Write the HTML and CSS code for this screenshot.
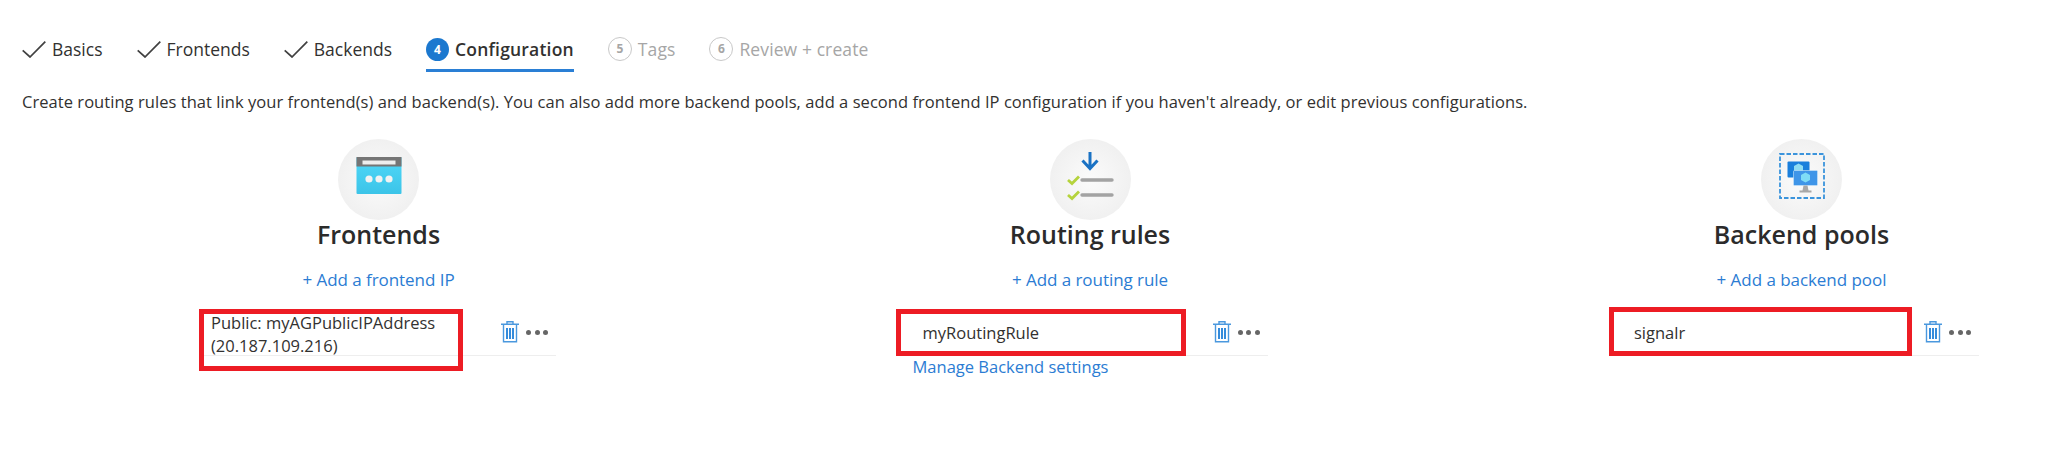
FILE: index.html
```html
<!DOCTYPE html>
<html lang="en">
<head>
  <meta charset="UTF-8" />
  <title>Create application gateway</title>
  <link rel="stylesheet" href="styles.css">
</head>
<body>

  <div class="tabs">
    <div class="tab">
      <svg class="check" viewBox="0 0 24 17"><path d="M0.7 9.3 L8 16 L23.3 0.7"/></svg>
      <span>Basics</span>
    </div>
    <div class="tab">
      <svg class="check" viewBox="0 0 24 17"><path d="M0.7 9.3 L8 16 L23.3 0.7"/></svg>
      <span>Frontends</span>
    </div>
    <div class="tab">
      <svg class="check" viewBox="0 0 24 17"><path d="M0.7 9.3 L8 16 L23.3 0.7"/></svg>
      <span>Backends</span>
    </div>
    <div class="tab active">
      <span class="step">4</span>
      <span>Configuration</span>
    </div>
    <div class="tab disabled">
      <span class="step">5</span>
      <span>Tags</span>
    </div>
    <div class="tab disabled">
      <span class="step">6</span>
      <span>Review + create</span>
    </div>
  </div>

  <p class="intro">Create routing rules that link your frontend(s) and backend(s). You can also add more backend pools, add a second frontend IP configuration if you haven't already, or edit previous configurations.</p>

  <div class="columns">

    <div class="column">
      <div class="icon-circle">
        <svg viewBox="0 0 46 45" width="46" height="45">
          <defs>
            <linearGradient id="sky" x1="0" y1="0" x2="0" y2="1">
              <stop offset="0" stop-color="#50d8f8"/>
              <stop offset="1" stop-color="#3cc4e8"/>
            </linearGradient>
          </defs>
          <rect x="0.5" y="0" width="45" height="37" rx="1" fill="url(#sky)"/>
          <rect x="0.5" y="0" width="45" height="9.5" fill="#757575"/>
          <rect x="6.5" y="3.5" width="33" height="4" fill="#eeeeee"/>
          <circle cx="13" cy="22" r="3.6" fill="#f2f2f2"/>
          <circle cx="23" cy="22" r="3.6" fill="#f2f2f2"/>
          <circle cx="33" cy="22" r="3.6" fill="#f2f2f2"/>
        </svg>
      </div>
      <h2>Frontends</h2>
      <a class="add-link" href="#">+ Add a frontend IP</a>
      <div class="item-row">
        <div class="item-name two-line">Public: myAGPublicIPAddress<br>(20.187.109.216)</div>
        <svg class="trash" viewBox="0 0 18 22"><path class="trash-line" d="M0 3.3 H18 M6 3 V0.7 H12 V3 M2.5 3.5 V20.7 H15.5 V3.5"/><path class="trash-bars" d="M6 7 V18 M9 7 V18 M12 7 V18"/></svg>
        <div class="dots"><i></i><i></i><i></i></div>
        <div class="callout callout-frontend"></div>
      </div>
    </div>

    <div class="column">
      <div class="icon-circle">
        <svg viewBox="0 0 50 59" width="50" height="59">
          <path d="M25 2 V19 M17.5 10.5 L25 18.5 L32.5 10.5" fill="none" stroke="#1a72c4" stroke-width="3"/>
          <path d="M3 30 L7 33.5 L14 26.5 M3 45 L7 48.5 L14 41.5" fill="none" stroke="#b5d33d" stroke-width="2.8"/>
          <path d="M17 30 H47 M17 45 H47" fill="none" stroke="#a3a3a3" stroke-width="3.4" stroke-linecap="round"/>
        </svg>
      </div>
      <h2>Routing rules</h2>
      <a class="add-link" href="#">+ Add a routing rule</a>
      <div class="item-row">
        <div class="item-name">myRoutingRule</div>
        <svg class="trash" viewBox="0 0 18 22"><path class="trash-line" d="M0 3.3 H18 M6 3 V0.7 H12 V3 M2.5 3.5 V20.7 H15.5 V3.5"/><path class="trash-bars" d="M6 7 V18 M9 7 V18 M12 7 V18"/></svg>
        <div class="dots"><i></i><i></i><i></i></div>
        <div class="callout callout-rule"></div>
      </div>
      <a class="manage-link" href="#">Manage Backend settings</a>
    </div>

    <div class="column">
      <div class="icon-circle">
        <svg viewBox="0 0 46 54" width="46" height="54">
          <rect x="1" y="1" width="44" height="44" fill="none" stroke="#3b94dc" stroke-width="1.8" stroke-dasharray="4.5 2"/>
          <rect x="8.5" y="8.5" width="22" height="16" rx="1" fill="#1a7fdc"/>
          <path d="M19.5 10.5 L24 13 V18 L19.5 20.5 L15 18 V13 Z" fill="#8fdcf2"/>
          <rect x="14.5" y="17.5" width="24" height="15" rx="1" fill="#3f95e8" stroke="#cfe5f8" stroke-width="0.6"/>
          <path d="M26.5 19.5 L31 22 V27 L26.5 29.5 L22 27 V22 Z" fill="#7fdcf6"/>
          <path d="M24.5 32.5 H28.5 L29.5 37.5 H32.5 V39.5 H20.5 V37.5 H23.5 Z" fill="#a8a8a8"/>
        </svg>
      </div>
      <h2>Backend pools</h2>
      <a class="add-link" href="#">+ Add a backend pool</a>
      <div class="item-row">
        <div class="item-name">signalr</div>
        <svg class="trash" viewBox="0 0 18 22"><path class="trash-line" d="M0 3.3 H18 M6 3 V0.7 H12 V3 M2.5 3.5 V20.7 H15.5 V3.5"/><path class="trash-bars" d="M6 7 V18 M9 7 V18 M12 7 V18"/></svg>
        <div class="dots"><i></i><i></i><i></i></div>
        <div class="callout callout-pool"></div>
      </div>
    </div>

  </div>

</body>
</html>
```

FILE: styles.css
```css
body {
  margin: 0;
  font-family: 'Open Sans', 'Noto Sans', sans-serif;
  background: #fff;
  color: #323130;
  overflow: hidden;
}

/* wizard tabs */
.tabs {
  display: flex;
  gap: 34px;
  padding: 32px 0 0 22px;
}

.tab {
  display: flex;
  align-items: center;
  gap: 6px;
  height: 34px;
  padding-bottom: 3px;
  border-bottom: 3px solid transparent;
  font-size: 17.5px;
}

.check {
  width: 24px;
  height: 17px;
  fill: none;
  stroke: #404040;
  stroke-width: 1.7;
}

.step {
  box-sizing: border-box;
  width: 24px;
  height: 24px;
  border: 1.5px solid #c8c8c8;
  border-radius: 50%;
  font-size: 12px;
  font-weight: 700;
  line-height: 21px;
  text-align: center;
}

.tab.active {
  border-bottom-color: #2a7fd5;
  font-weight: 600;
  letter-spacing: 0.2px;
}

.tab.active .step {
  width: 23px;
  height: 23px;
  background: #1b78cf;
  border: none;
  color: #fff;
  line-height: 23px;
  letter-spacing: 0;
}

.tab.disabled {
  color: #a6a6a6;
  letter-spacing: 0.1px;
}

.intro {
  margin: 19px 0 0 22px;
  font-size: 16.5px;
  line-height: 22px;
  letter-spacing: 0.05px;
  white-space: nowrap;
}

/* three columns */
.columns {
  display: flex;
  justify-content: space-between;
  padding: 26px 91px 0 201px;
}

.column {
  display: flex;
  flex-direction: column;
  align-items: center;
  width: 355px;
}

.icon-circle {
  display: flex;
  align-items: center;
  justify-content: center;
  width: 81px;
  height: 81px;
  border-radius: 50%;
  background: radial-gradient(circle, #fbfbfb 0%, #ececec 100%);
}

h2 {
  margin: -3px 0 0;
  font-size: 25px;
  font-weight: 600;
  line-height: 34px;
  color: #2b2b2b;
}

.add-link {
  margin-top: 17px;
  font-size: 17px;
  line-height: 24px;
  letter-spacing: -0.05px;
  color: #2b7cd3;
  text-decoration: none;
}

.item-row {
  position: relative;
  box-sizing: border-box;
  display: flex;
  align-items: center;
  align-self: stretch;
  height: 46px;
  margin-top: 18px;
  padding-right: 8px;
  padding-bottom: 1px;
  border-bottom: 1px solid #eeeeee;
  font-size: 16.5px;
}

.item-name {
  flex: 1;
  padding-left: 10px;
}

.two-line {
  margin-top: 3px;
  line-height: 23px;
}

.trash {
  width: 18px;
  height: 22px;
  margin-right: 7px;
}

.trash-line {
  fill: none;
  stroke: #4a98de;
  stroke-width: 1.4;
}

.trash-bars {
  fill: none;
  stroke: #1f7fd8;
  stroke-width: 1.8;
}

.dots {
  display: flex;
  gap: 3.5px;
}

.dots i {
  width: 5px;
  height: 5px;
  border-radius: 50%;
  background: #666;
}

.manage-link {
  align-self: flex-start;
  margin-top: -1px;
  font-size: 16.5px;
  line-height: 24px;
  color: #2b7cd3;
  text-decoration: none;
}

/* red annotation boxes drawn on top of the rows */
.callout {
  position: absolute;
  box-sizing: border-box;
  border: 5px solid #ed1c24;
}

.callout-frontend {
  left: -2px;
  top: -1px;
  width: 264px;
  height: 62px;
}

.callout-rule {
  left: -17px;
  top: -1px;
  width: 290px;
  height: 47px;
}

.callout-pool {
  left: -15px;
  top: -3px;
  width: 303px;
  height: 49px;
}
```
